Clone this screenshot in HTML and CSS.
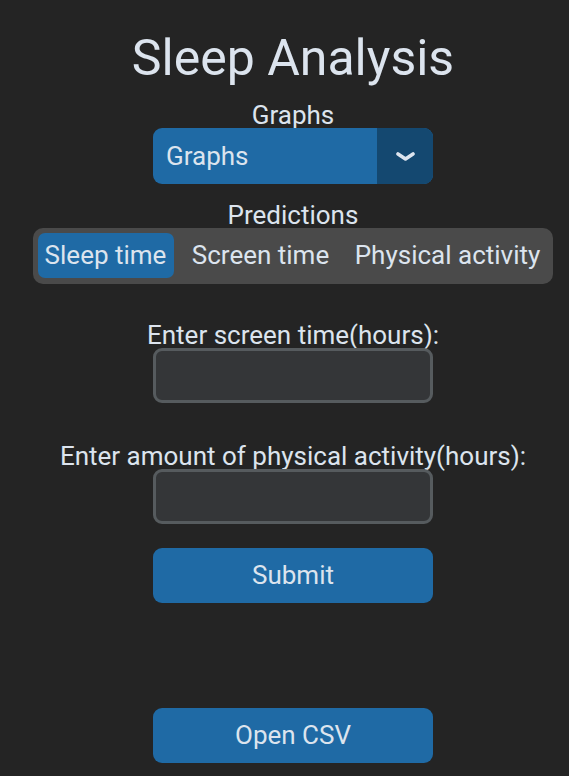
FILE: index.html
```html
<!DOCTYPE html>
<html>
<head>
<meta charset="utf-8">
<link rel="stylesheet" href="styles.css">
</head>
<body>
<main class="app">
  <h1 class="title">Sleep Analysis</h1>
  <div class="label">Graphs</div>
  <div class="dropdown">
    <span class="dropdown-text">Graphs</span>
    <span class="dropdown-arrow">
      <svg width="20" height="12" viewBox="0 0 20 12"><polyline points="3,3 10.5,8 18,3" fill="none" stroke="#dce4ee" stroke-width="3.6" stroke-linecap="round" stroke-linejoin="round"/></svg>
    </span>
  </div>
  <div class="label gap-18">Predictions</div>
  <div class="segmented">
    <div class="seg seg-sleep selected">Sleep time</div>
    <div class="seg seg-screen">Screen time</div>
    <div class="seg seg-phys">Physical activity</div>
  </div>
  <div class="label gap-38">Enter screen time(hours):</div>
  <div class="entry"></div>
  <div class="label gap-40">Enter amount of physical activity(hours):</div>
  <div class="entry"></div>
  <button class="btn gap-25">Submit</button>
  <button class="btn gap-105">Open CSV</button>
</main>
</body>
</html>
```

FILE: styles.css
```css
* { box-sizing: border-box; }
html, body {
  margin: 0;
  padding: 0;
  background: #242424;
}
body {
  font-family: Roboto, "Noto Sans", sans-serif;
  color: #dce4ee;
  width: 569px;
  height: 776px;
  overflow: hidden;
}
.app {
  display: flex;
  flex-direction: column;
  align-items: center;
  padding-left: 17px;
  padding-top: 28px;
  width: 569px;
}
.title {
  margin: 0;
  font-size: 50px;
  font-weight: 400;
  line-height: 60px;
  height: 60px;
  white-space: nowrap;
}
.label {
  font-size: 26px;
  line-height: 26px;
  height: 26px;
  white-space: nowrap;
  margin-top: 14px;
}
.gap-18 { margin-top: 18px; }
.gap-38 { margin-top: 38px; }
.gap-40 { margin-top: 40px; }
.gap-25 { margin-top: 24px; }
.gap-105 { margin-top: 105px; }

.dropdown {
  width: 280px;
  height: 56px;
  border-radius: 9px;
  background: #1f6aa5;
  display: flex;
  overflow: hidden;
}
.dropdown-text {
  flex: 1;
  font-size: 26px;
  line-height: 56px;
  padding-left: 13px;
}
.dropdown-arrow {
  width: 56px;
  background: #144870;
  display: flex;
  align-items: center;
  justify-content: center;
}
.dropdown-arrow svg { display: block; margin-top: 1px; }

.segmented {
  width: 520px;
  height: 56px;
  margin-left: -1px;
  border-radius: 10px;
  background: #4a4a4a;
  padding: 5px;
  display: flex;
}
.seg {
  height: 45px;
  font-size: 26px;
  line-height: 45px;
  text-align: center;
  border-radius: 7px;
  white-space: nowrap;
}
.seg-sleep { width: 136px; }
.seg-screen { width: 174px; }
.seg-phys { width: 200px; }
.seg.selected { background: #1f6aa5; }

.entry {
  width: 280px;
  height: 55px;
  border: 3px solid #565b5e;
  border-radius: 9px;
  background: #343638;
}
.btn {
  width: 280px;
  height: 55px;
  border: none;
  border-radius: 9px;
  background: #1f6aa5;
  color: #dce4ee;
  font-family: Roboto, "Noto Sans", sans-serif;
  font-size: 26px;
  line-height: 53px;
  padding: 0;
}
```
